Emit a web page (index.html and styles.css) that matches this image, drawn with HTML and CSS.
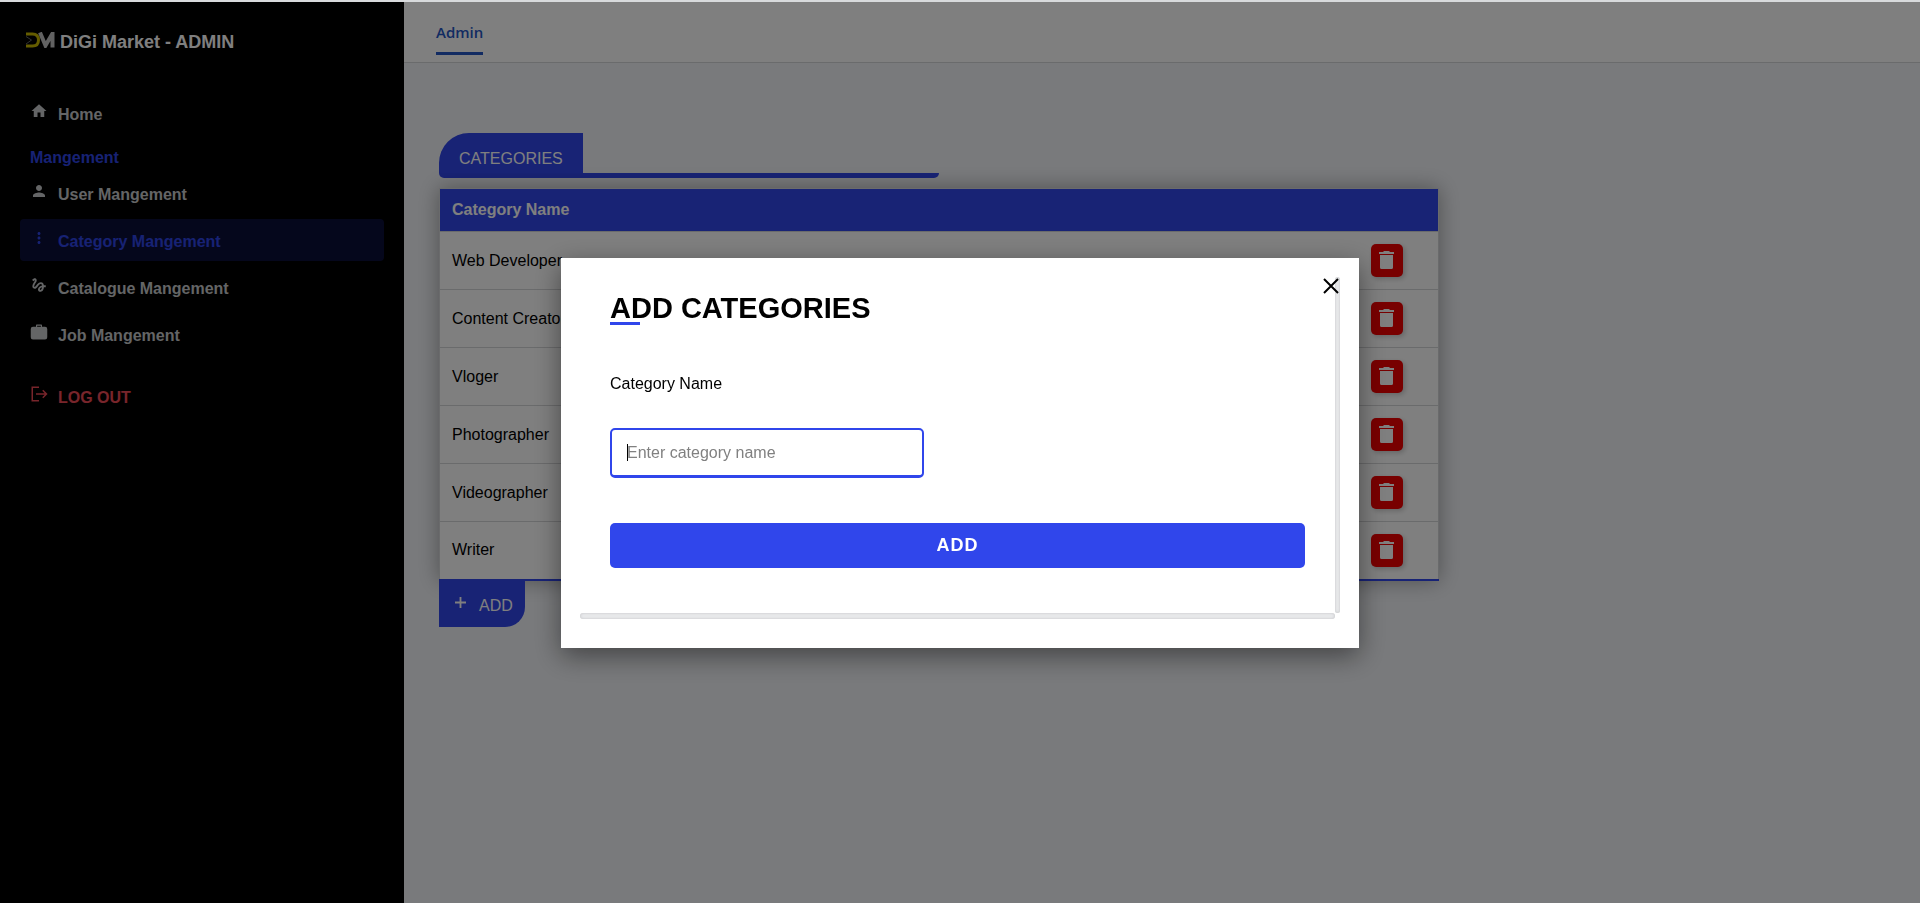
FILE: index.html
```html
<!DOCTYPE html>
<html lang="en">
<head>
<meta charset="utf-8">
<title>DiGi Market - ADMIN</title>
<link rel="stylesheet" href="styles.css">
</head>
<body>
<svg class="sprite" aria-hidden="true">
  <symbol id="trash" viewBox="0 0 15 18"><path d="M1 4h13v12.500a1.500 1.500 0 0 1-1.500 1.500h-10a1.500 1.500 0 0 1-1.500-1.500zM0 1h4l1-1h5l1 1h4v2H0z"/></symbol>
</svg>
<div class="app">
  <aside class="sidebar">
    <a class="brand" href="#">
      <svg class="logo" viewBox="0 0 30 16" aria-hidden="true">
        <path class="logo-d" d="M1 2H7.500C11.500 2 13.500 4 13.500 8S11.500 14 7.500 14H1"/>
        <path class="logo-m" d="M15 0.500L20.500 13.500L27.500 1.500V15.500"/>
        <path class="logo-arrow" d="M1 4.500L6.500 8L1 12"/>
      </svg>
      <span>DiGi Market - ADMIN</span>
    </a>
    <nav class="nav">
      <a class="nav-item" href="#"><svg viewBox="0 0 24 24"><path d="M10 20v-6h4v6h5v-8h3L12 3 2 12h3v8z"/></svg>Home</a>
      <h2 class="nav-title">Mangement</h2>
      <a class="nav-item" href="#"><svg viewBox="0 0 24 24"><path d="M12 12c2.210 0 4-1.790 4-4s-1.790-4-4-4-4 1.790-4 4 1.790 4 4 4zm0 2c-2.670 0-8 1.340-8 4v2h16v-2c0-2.660-5.330-4-8-4z"/></svg>User Mangement</a>
      <a class="nav-item active" href="#"><svg viewBox="0 0 24 24"><path d="M12 8c1.100 0 2-.9 2-2s-.9-2-2-2-2 .9-2 2 .9 2 2 2zm0 2c-1.100 0-2 .9-2 2s.9 2 2 2 2-.9 2-2-.9-2-2-2zm0 6c-1.100 0-2 .9-2 2s.9 2 2 2 2-.9 2-2-.9-2-2-2z"/></svg>Category Mangement</a>
      <a class="nav-item" href="#"><svg viewBox="0 0 24 24"><path d="M4.590 6.890c.7-.71 1.400-1.350 1.710-1.220.5.200 0 1.030-.3 1.520-.25.420-2.860 3.890-2.860 6.310 0 1.280.48 2.340 1.340 2.980.75.560 1.740.730 2.640.460 1.070-.31 1.950-1.400 3.060-2.770 1.210-1.490 2.830-3.440 4.080-3.440 1.630 0 1.650 1.010 1.760 1.790-3.780.640-5.380 3.670-5.380 5.370s1.440 3.090 3.210 3.090c1.630 0 4.290-1.330 4.690-6.100H21v-2.500h-2.470c-.15-1.650-1.090-4.200-4.030-4.200-2.250 0-4.180 1.910-4.940 2.840-.58.730-2.060 2.480-2.290 2.720-.25.300-.68.840-1.110.840-.45 0-.72-.83-.36-1.920.35-1.090 1.400-2.860 1.850-3.520.78-1.140 1.300-1.920 1.300-3.280C8.950 3.690 7.310 3 6.440 3 5.120 3 3.970 4 3.720 4.250c-.36.360-.66.660-.88.930l1.750 1.710zm9.290 11.660c-.31 0-.74-.26-.74-.72 0-.6.730-2.200 2.870-2.760-.3 2.690-1.430 3.480-2.130 3.480z"/></svg>Catalogue Mangement</a>
      <a class="nav-item" href="#"><svg viewBox="0 0 24 24"><path d="M15 2H9a1 1 0 0 0-1 1v2H4a3 3 0 0 0-3 3v11a3 3 0 0 0 3 3h16a3 3 0 0 0 3-3V8a3 3 0 0 0-3-3h-4V3a1 1 0 0 0-1-1zM9.500 3.500h5V5h-5z"/></svg>Job Mangement</a>
      <a class="nav-item logout" href="#"><svg viewBox="0 0 24 24"><path d="M12 3H3v18h9M8 12h13M17 7L22 12 17 17" fill="none" stroke="currentColor" stroke-width="2"/></svg>LOG OUT</a>
    </nav>
  </aside>
  <main class="main">
    <header class="topbar"><a class="tab" href="#">Admin</a></header>
    <section class="content">
      <div class="heading"><h1>CATEGORIES</h1></div>
      <table class="table">
        <thead><tr><th scope="col">Category Name</th><th class="action"></th></tr></thead>
        <tbody>
          <tr><td>Web Developer</td><td class="action"><button class="delete" aria-label="Delete Web Developer"><svg><use href="#trash"/></svg></button></td></tr>
          <tr><td>Content Creator</td><td class="action"><button class="delete" aria-label="Delete Content Creator"><svg><use href="#trash"/></svg></button></td></tr>
          <tr><td>Vloger</td><td class="action"><button class="delete" aria-label="Delete Vloger"><svg><use href="#trash"/></svg></button></td></tr>
          <tr><td>Photographer</td><td class="action"><button class="delete" aria-label="Delete Photographer"><svg><use href="#trash"/></svg></button></td></tr>
          <tr><td>Videographer</td><td class="action"><button class="delete" aria-label="Delete Videographer"><svg><use href="#trash"/></svg></button></td></tr>
          <tr><td>Writer</td><td class="action"><button class="delete" aria-label="Delete Writer"><svg><use href="#trash"/></svg></button></td></tr>
        </tbody>
      </table>
      <button class="add"><svg viewBox="0 0 12 12" aria-hidden="true"><path d="M6 0v12M0 6h12"/></svg>ADD</button>
    </section>
  </main>
</div>
<div class="overlay">
  <div class="modal" role="dialog" aria-modal="true" aria-labelledby="modal-title">
    <div class="modal-scroll">
      <form class="form">
        <h2 class="form-title" id="modal-title">ADD CATEGORIES</h2>
        <label class="form-label" for="category">Category Name</label>
        <div class="field"><input class="form-input" id="category" type="text" placeholder="Enter category name" autofocus></div>
        <button class="form-submit" type="button">ADD</button>
      </form>
      <div class="track track-y"></div>
      <div class="track track-x"></div>
    </div>
    <button class="close" aria-label="Close"><svg viewBox="0 0 16 16"><path d="M1 1l14 14M15 1L1 15"/></svg></button>
  </div>
</div>
</body>
</html>
```
FILE: styles.css
```css
* { box-sizing: border-box; }

body {
  margin: 0;
  border-top: 2px solid #d8dadc;
  font: 16px/24px "Liberation Sans", Arial, sans-serif;
  color: #000;
  background: #f3f5f9;
}

h1, h2 { margin: 0; }
a { color: inherit; text-decoration: none; }
button { font: inherit; border: 0; cursor: pointer; }
.sprite { display: none; }

.app { display: flex; min-height: calc(100vh - 2px); }

.sidebar {
  flex: 0 0 404px;
  padding: 24px 20px;
  background: #000;
}

.brand {
  display: flex;
  align-items: center;
  gap: 5px;
  padding-left: 5px;
  margin-bottom: 34px;
  height: 32px;
  font-size: 18px;
  font-weight: bold;
  color: #fff;
}
.logo { width: 30px; height: 16px; fill: none; margin-bottom: 4px; }
.logo-d { stroke: #c8b800; stroke-width: 3; }
.logo-m { stroke: #c4c4c4; stroke-width: 4; }
.logo-arrow { stroke: #666; stroke-width: 1; }

.nav { display: flex; flex-direction: column; gap: 5px; }
.nav-item {
  display: flex;
  align-items: center;
  gap: 10px;
  height: 42px;
  padding: 4px 10px 0;
  border-radius: 4px;
  font-weight: bold;
  color: #c8cacc;
}
.nav-item svg { width: 18px; height: 18px; margin-bottom: 8px; fill: currentColor; }
.nav-item.active { color: #2f45e9; background: #0b0f38; }
.nav-item.logout { margin-top: 15px; color: #f04a57; }
.nav-title {
  height: 28px;
  padding: 7px 10px 0;
  font-size: 16px;
  line-height: 24px;
  color: #2f45e9;
}

.main { flex: 1; min-width: 0; }
.topbar {
  display: flex;
  height: 61px;
  padding: 18px 32px 7px;
  background: #fff;
  border-bottom: 1px solid #d5d6d8;
}
.tab {
  border-bottom: 3px solid #2456c4;
  font-family: "Open Sans", "Noto Sans", sans-serif;
  font-size: 15px;
  font-weight: 600;
  color: #2456c4;
}

.content { padding: 70px 35px; }
.heading {
  display: flex;
  max-width: 500px;
  border-bottom: 5px solid #3046eb;
  border-radius: 0 0 5px 5px;
  margin-bottom: 10px;
}
.heading h1 {
  height: 40px;
  padding: 14px 20px 2px;
  font-size: 16px;
  line-height: 24px;
  font-weight: normal;
  color: #fff;
  background: #3046eb;
  border-radius: 30px 0 0 0;
}

.table {
  width: 100%;
  max-width: 1000px;
  border-collapse: collapse;
  background: #fff;
  border: 1px solid #d5d6d8;
  border-bottom: 2px solid #3046eb;
  box-shadow: 0 0 20px rgba(0, 0, 0, 0.35);
}
.table th { height: 43px; padding: 0 12px; text-align: left; color: #fff; background: #3046eb; }
.table td { height: 58px; padding: 0 12px; border-top: 1px solid #d5d6d8; }
.table .action { width: 103px; padding: 0 35px 0 35px; }
.delete {
  display: flex;
  align-items: center;
  justify-content: center;
  width: 32px;
  height: 33px;
  padding: 0 0 1px;
  border-radius: 5px;
  background: #f00000;
  box-shadow: 2px 2px 5px rgba(0, 0, 0, 0.2);
}
.delete svg { width: 15px; height: 18px; fill: #fff; }

.add {
  display: flex;
  align-items: center;
  gap: 13px;
  height: 46px;
  padding: 4px 12px 0 16px;
  color: #fff;
  background: #3046eb;
  border-radius: 0 0 20px 0;
}
.add svg { width: 11px; height: 11px; margin-bottom: 6px; stroke: #fff; stroke-width: 2; }

.overlay {
  position: fixed;
  inset: 2px 0 0;
  display: flex;
  align-items: center;
  justify-content: center;
  background: rgba(0, 0, 0, 0.5);
}
.modal {
  position: relative;
  width: 798px;
  padding: 19px;
  background: #fff;
  box-shadow: 0 8px 25px rgba(0, 0, 0, 0.45);
}
.modal-scroll {
  display: grid;
  grid-template-columns: 1fr 5px;
  grid-template-rows: auto 6px;
  padding-bottom: 10px;
}
.track {
  border-radius: 4px;
  background: #e9eaec;
  box-shadow: inset 0 0 3px #c0c2c4;
}
.form {
  display: flex;
  flex-direction: column;
  align-items: flex-start;
  padding: 11px 30px 45px;
}
.form-title {
  font-size: 29px;
  line-height: 40px;
}
.form-title::after {
  content: "";
  display: block;
  width: 30px;
  height: 3px;
  margin-top: -6px;
  background: #3046eb;
}
.form-label { margin: 47px 0 32px; }
.field { position: relative; display: flex; }
/* text cursor of the focused field */
.field::before {
  content: "";
  position: absolute;
  left: 17px;
  top: 16px;
  width: 1px;
  height: 17px;
  background: #000;
}
.form-input {
  width: 314px;
  height: 50px;
  padding: 2px 15px 0;
  border: 2px solid #3046eb;
  border-bottom-width: 3px;
  border-radius: 5px;
  outline: 0;
  font: inherit;
  caret-color: transparent;
}
.form-input::placeholder { color: #808080; }
.form-submit {
  width: 100%;
  height: 45px;
  margin-top: 45px;
  border-radius: 5px;
  background: #3046eb;
  color: #fff;
  font-size: 18px;
  font-weight: bold;
  letter-spacing: 1px;
}
.close {
  position: absolute;
  top: 20px;
  right: 20px;
  display: flex;
  padding: 0;
  background: none;
}
.close svg { width: 16px; height: 16px; stroke: #000; stroke-width: 2; }
```
